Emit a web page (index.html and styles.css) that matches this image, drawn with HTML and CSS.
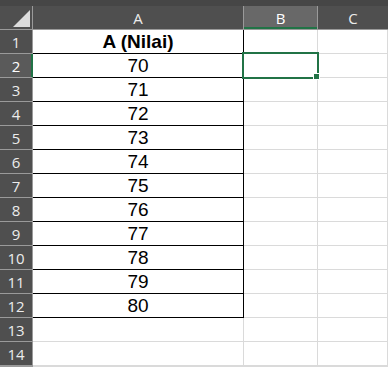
FILE: index.html
```html
<!DOCTYPE html>
<html>
<head>
<meta charset="utf-8">
<link rel="stylesheet" href="styles.css">
</head>
<body>
<div class="sheet">
  <div class="strip"></div>

  <div class="hd corner">
    <svg class="tri" width="17" height="17" viewBox="0 0 17 17"><polygon points="0,17 17,17 17,0" fill="#dcdcdc"/></svg>
  </div>
  <div class="hd col">A</div>
  <div class="hd col sel">B</div>
  <div class="hd col last">C</div>

  <div class="hd row">1</div><div class="c a b"><b>A (Nilai)</b></div><div class="c"></div><div class="c"></div>
  <div class="hd row rsel">2</div><div class="c a">70</div><div class="c"></div><div class="c"></div>
  <div class="hd row">3</div><div class="c a">71</div><div class="c"></div><div class="c"></div>
  <div class="hd row">4</div><div class="c a">72</div><div class="c"></div><div class="c"></div>
  <div class="hd row">5</div><div class="c a">73</div><div class="c"></div><div class="c"></div>
  <div class="hd row">6</div><div class="c a">74</div><div class="c"></div><div class="c"></div>
  <div class="hd row">7</div><div class="c a">75</div><div class="c"></div><div class="c"></div>
  <div class="hd row">8</div><div class="c a">76</div><div class="c"></div><div class="c"></div>
  <div class="hd row">9</div><div class="c a">77</div><div class="c"></div><div class="c"></div>
  <div class="hd row">10</div><div class="c a">78</div><div class="c"></div><div class="c"></div>
  <div class="hd row">11</div><div class="c a">79</div><div class="c"></div><div class="c"></div>
  <div class="hd row">12</div><div class="c a">80</div><div class="c"></div><div class="c"></div>
  <div class="hd row">13</div><div class="c"></div><div class="c"></div><div class="c"></div>
  <div class="hd row">14</div><div class="c"></div><div class="c"></div><div class="c"></div>
  <div class="hd row"></div><div class="c"></div><div class="c"></div><div class="c"></div>

  <div class="selbox"><span class="handle"></span></div>
</div>
</body>
</html>
```

FILE: styles.css
```css
html, body {
  margin: 0;
  padding: 0;
  background: #ffffff;
  overflow: hidden;
}
.sheet {
  position: relative;
  display: grid;
  grid-template-columns: 33px 211px 74px 70px;
  grid-template-rows: 6px 24px repeat(14, 24px) 1px;
  width: 388px;
  height: 367px;
  overflow: hidden;
}
.strip {
  grid-column: 1 / -1;
  background: #464646;
}
.hd {
  box-sizing: border-box;
  background: #4f4f4f;
  color: #ececec;
  font-family: "Open Sans", "Noto Sans", sans-serif;
  font-size: 15px;
  display: flex;
  align-items: center;
  justify-content: center;
  border-right: 1px solid #9a9a9a;
  border-bottom: 1px solid #9a9a9a;
}
.corner {
  position: relative;
}
.corner .tri {
  position: absolute;
  left: 13px;
  top: 4px;
}
.col.sel {
  background: #686868;
  color: #ffffff;
  box-shadow: inset 0 -2px 0 #217346;
}
.col.last {
  border-right: none;
}
.row.rsel {
  background: #5a5a5a;
  color: #ffffff;
  box-shadow: inset -1px 0 0 #217346;
  border-right-color: #217346;
}
.c {
  box-sizing: border-box;
  border-right: 1px solid #dadada;
  border-bottom: 1px solid #dadada;
  font-family: "Liberation Sans", Arial, sans-serif;
  font-size: 19px;
  color: #000000;
  display: flex;
  align-items: center;
  justify-content: center;
}
.c.a {
  border-right-color: #000000;
  border-bottom-color: #000000;
}
.c b {
  font-weight: bold;
}
.selbox {
  position: absolute;
  left: 242px;
  top: 52px;
  width: 77px;
  height: 27px;
  box-sizing: border-box;
  border: 2px solid #217346;
}
.handle {
  position: absolute;
  right: -3px;
  bottom: -3px;
  width: 5px;
  height: 5px;
  background: #217346;
  border: 1px solid #ffffff;
}
```
